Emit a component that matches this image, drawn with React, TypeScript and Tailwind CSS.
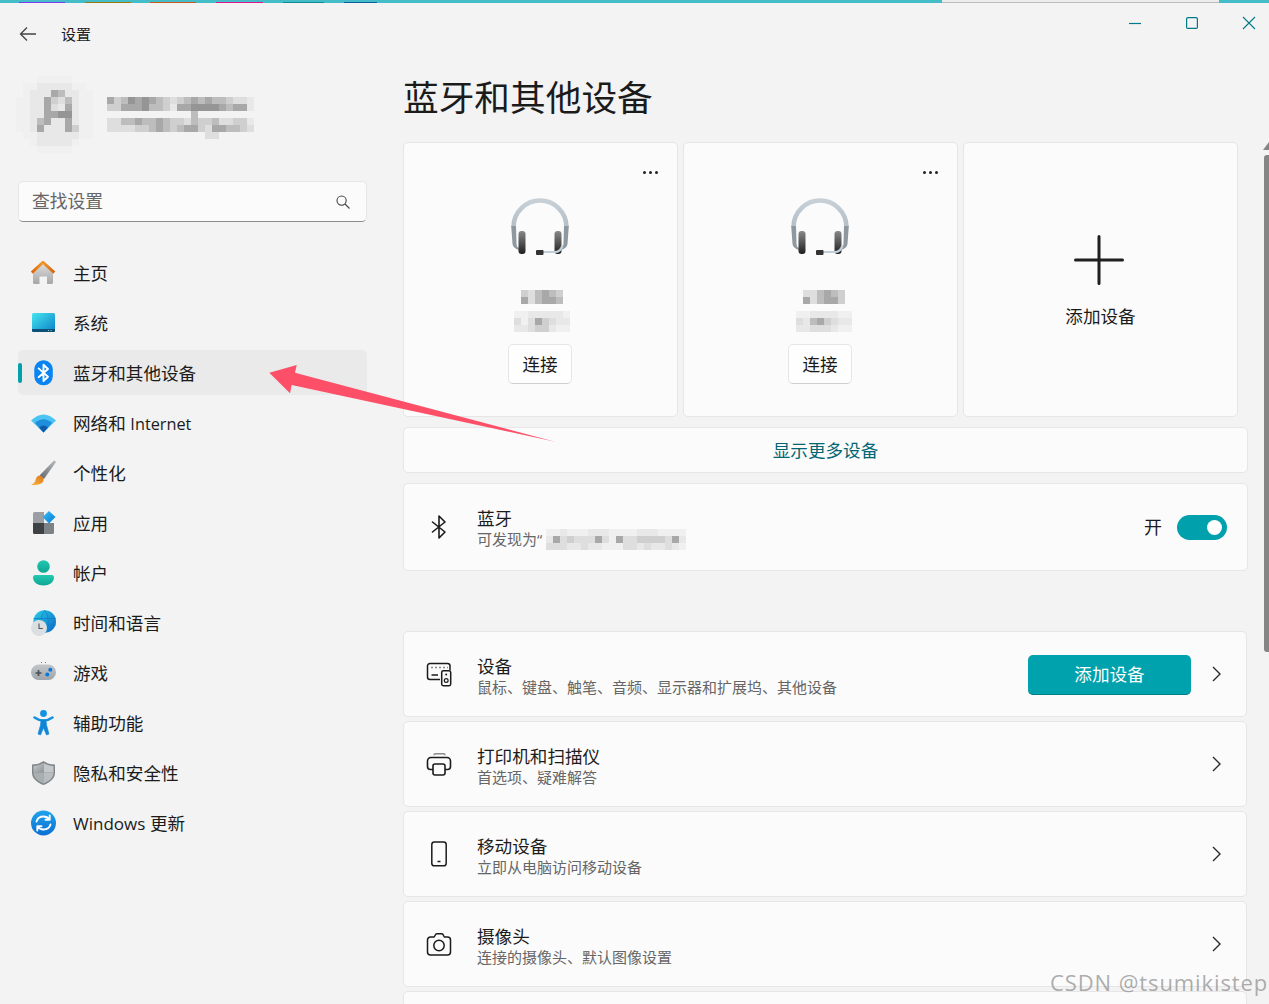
import React from "react";

const LV: Record<string, string> = {
  "1": "#f0f0f0", "2": "#e8e8e8", "3": "#dedede", "4": "#cfcfcf", "5": "#bdbdbd", "6": "#a8a8a8", "7": "#959595",
};

function Mosaic({ rows, cell = 7, className = "" }: { rows: string[]; cell?: number; className?: string }) {
  const w = Math.max(...rows.map((r) => r.length)) * cell;
  const h = rows.length * cell;
  return (
    <svg width={w} height={h} viewBox={`0 0 ${w} ${h}`} className={`block shrink-0 ${className}`} shapeRendering="crispEdges">
      {rows.map((r, y) =>
        r.split("").map((c, x) => (LV[c] ? <rect key={`${x}-${y}`} x={x * cell} y={y * cell} width={cell} height={cell} fill={LV[c]} /> : null))
      )}
    </svg>
  );
}

const I = ({ children, s = 26 }: { children: React.ReactNode; s?: number }) => (
  <svg width={s} height={s} viewBox={`0 0 ${s} ${s}`} className="block shrink-0" fill="none">{children}</svg>
);

const Home = () => (
  <I>
    <defs><linearGradient id="h1" x1="0" y1="0" x2="0" y2="1"><stop offset="0" stopColor="#dedede" /><stop offset="1" stopColor="#a6a6a6" /></linearGradient>
    <linearGradient id="h2" x1="0" y1="0" x2="1" y2="0"><stop offset="0" stopColor="#e0640a" /><stop offset=".5" stopColor="#f09a2a" /><stop offset="1" stopColor="#d95f08" /></linearGradient></defs>
    <path d="M13 3 L23 12 V22.5 a1.5 1.5 0 0 1 -1.5 1.5 H17 V16.5 H9.5 V24 H4.5 A1.5 1.5 0 0 1 3 22.5 V12 Z" fill="url(#h1)" />
    <path d="M1.8 12.6 L13 2.2 L24.2 12.6" stroke="url(#h2)" strokeWidth="2.8" strokeLinejoin="round" />
  </I>
);
const Sys = () => (
  <I>
    <defs><linearGradient id="s1" x1="0" y1="0" x2="1" y2="1"><stop offset="0" stopColor="#45e6f0" /><stop offset="1" stopColor="#0c7fc8" /></linearGradient></defs>
    <rect x="2" y="3" width="23" height="19" rx="1.5" fill="url(#s1)" />
    <path d="M2 19 H25 V20.5 a1.5 1.5 0 0 1 -1.5 1.5 H3.5 A1.5 1.5 0 0 1 2 20.5 Z" fill="#0d4f75" />
    <rect x="18" y="20" width="1" height="1" fill="#9cc" /><rect x="20.5" y="20" width="1" height="1" fill="#9cc" />
  </I>
);
const Bt = () => (
  <I>
    <rect x="4.3" y="0.3" width="18.5" height="25" rx="9" fill="#0a84f2" />
    <path d="M8.6 8.4 L18 16.8 L13.5 21 V4.8 L18 9 L8.6 17.2" stroke="#fff" strokeWidth="1.9" strokeLinejoin="round" strokeLinecap="round" />
  </I>
);
const Wifi = () => (
  <I>
    <path d="M1 10.5 Q13.5 -1.5 26 10.5 L13.5 22.5 Z" fill="#4cc4f2" />
    <path d="M5 13 Q13.5 5.5 22 13 L13.5 22.5 Z" fill="#1f8edc" />
    <path d="M9 17.5 Q13.5 13.5 18 17.5 L13.5 22.5 Z" fill="#0f5cab" />
  </I>
);
const Brush = () => (
  <I>
    <defs><linearGradient id="b1" x1="1" y1="0" x2="0" y2="1"><stop offset="0" stopColor="#b8bcc0" /><stop offset="1" stopColor="#62676c" /></linearGradient>
    <linearGradient id="b2" x1="1" y1="0" x2="0" y2="1"><stop offset="0" stopColor="#d9781e" /><stop offset="1" stopColor="#ffb43c" /></linearGradient></defs>
    <path d="M24 0.5 Q26 0.5 25.7 2.5 L14 19 L9.5 15.5 Z" fill="url(#b1)" />
    <path d="M8 16 C11 15 14 17.5 13.5 20.5 C12.5 24.5 6 25.5 1 25 C4 23.5 5 22 5.5 20 C6 18 6.5 17 8 16 Z" fill="url(#b2)" />
  </I>
);
const Apps = () => (
  <I>
    <defs><linearGradient id="a1" x1="0" y1="0" x2="1" y2="1"><stop offset="0" stopColor="#36c2f6" /><stop offset="1" stopColor="#0a76d6" /></linearGradient></defs>
    <path d="M4.5 2 H14 V13 H3 V3.5 A1.5 1.5 0 0 1 4.5 2 Z" fill="#9b9fa3" />
    <path d="M3 13 H14 V24 H4.5 A1.5 1.5 0 0 1 3 22.5 Z" fill="#3e4245" />
    <path d="M14 13 H24 V22.5 A1.5 1.5 0 0 1 22.5 24 H14 Z" fill="#7d8287" />
    <path d="M19 1 L25.5 7 L19 13.5 L12.5 7 Z" fill="url(#a1)" />
  </I>
);
const User = () => (
  <I>
    <defs><linearGradient id="u1" x1="0" y1="0" x2="0" y2="1"><stop offset="0" stopColor="#22c9b0" /><stop offset="1" stopColor="#0fa596" /></linearGradient></defs>
    <circle cx="13.5" cy="6.5" r="6.3" fill="url(#u1)" />
    <path d="M5.5 15 H21.5 A2.5 2.5 0 0 1 24 17.5 C24 22.5 19 25.5 13.5 25.5 C8 25.5 3 22.5 3 17.5 A2.5 2.5 0 0 1 5.5 15 Z" fill="url(#u1)" />
  </I>
);
const Globe = () => (
  <I>
    <defs><linearGradient id="g1" x1="0" y1="0" x2="1" y2="1"><stop offset="0" stopColor="#2ad0e4" /><stop offset="1" stopColor="#0b64c8" /></linearGradient></defs>
    <circle cx="14.7" cy="11.5" r="11.3" fill="url(#g1)" />
    <path d="M14.7 0.5 C10 6 10 17 14.7 23 M14.7 0.5 C19.5 6 19.5 17 14.7 23 M3.6 8.5 H25.8 M3.6 15 H25.8" stroke="#0f7fc8" strokeWidth=".8" />
    <circle cx="9" cy="18" r="8" fill="#dcdfe1" />
    <path d="M9 13.5 V18.5 H12.8" stroke="#555" strokeWidth="1.1" />
  </I>
);
const Game = () => (
  <I>
    <defs><linearGradient id="p1" x1="0" y1="0" x2="0" y2="1"><stop offset="0" stopColor="#c1c6ca" /><stop offset="1" stopColor="#9ea4a9" /></linearGradient></defs>
    <rect x="1" y="4.5" width="25" height="15.5" rx="7.7" fill="url(#p1)" />
    <path d="M5.5 13 H11.5 M8.5 10 V16" stroke="#4e5255" strokeWidth="1.7" />
    <circle cx="20.3" cy="9.8" r="2" fill="#0b78d8" /><circle cx="17.3" cy="14.5" r="2" fill="#0b78d8" />
    <rect x="11" y="2" width="1" height="1" fill="#777" /><rect x="15" y="2" width="1" height="1" fill="#777" />
  </I>
);
const Access = () => (
  <I>
    <circle cx="13.5" cy="3.5" r="3.4" fill="#1492e2" />
    <path d="M4.5 7.5 C8 10 10.5 10.5 13.5 10.5 C16.5 10.5 19 10 22.5 7.5" stroke="#1492e2" strokeWidth="2.6" strokeLinecap="round" />
    <path d="M11 10 H16 L16.5 15 L19 24 L16.5 25 L13.5 18 L10.5 25 L8 24 L10.5 15 Z" fill="#1086d8" stroke="#1086d8" strokeWidth=".6" strokeLinejoin="round" />
  </I>
);
const Shield = () => (
  <I>
    <defs><linearGradient id="d1" x1="0" y1="0" x2="1" y2="1"><stop offset="0" stopColor="#c9ced2" /><stop offset="1" stopColor="#8d9296" /></linearGradient></defs>
    <path d="M13.5 1 C17 3.5 21 4.5 25 4.5 V13 C25 18.5 19.5 23 13.5 25 C7.5 23 2 18.5 2 13 V4.5 C6 4.5 10 3.5 13.5 1 Z" fill="#81868a" />
    <path d="M13.5 3 C17 5 20.5 6 23.5 6 V12.5 H13.5 Z" fill="#c4c8cb" />
    <path d="M13.5 3 C10 5 6.5 6 3.5 6 V12.5 H13.5 Z" fill="url(#d1)" />
    <path d="M3.5 12.5 H13.5 V23.4 C8 21.5 3.5 17.5 3.5 13 Z" fill="#a9aeb1" />
    <path d="M23.5 12.5 H13.5 V23.4 C19 21.5 23.5 17.5 23.5 13 Z" fill="#b9bdc0" />
  </I>
);
const Update = () => (
  <I>
    <defs><linearGradient id="w1" x1="0" y1="0" x2="0" y2="1"><stop offset="0" stopColor="#1fa4ec" /><stop offset="1" stopColor="#0a6ed2" /></linearGradient></defs>
    <circle cx="13.5" cy="13" r="12.5" fill="url(#w1)" />
    <path d="M6.5 11.5 C7.5 8 10.5 6.5 13.5 6.5 C16 6.5 18 7.5 19.5 9.5 M19.7 5.5 V9.8 H15.5" stroke="#fff" strokeWidth="1.9" strokeLinecap="round" strokeLinejoin="round" />
    <path d="M20.5 14.5 C19.5 18 16.5 19.5 13.5 19.5 C11 19.5 9 18.5 7.5 16.5 M7.3 20.5 V16.2 H11.5" stroke="#fff" strokeWidth="1.9" strokeLinecap="round" strokeLinejoin="round" />
  </I>
);

const Headset = ({ k }: { k: string }) => (
  <svg width="58" height="58" viewBox="0 0 58 58" fill="none" className="block">
    <defs>
      <linearGradient id={`e1${k}`} x1="0" y1="0" x2="0" y2="1"><stop offset="0" stopColor="#8a8a8a" /><stop offset="1" stopColor="#1f1f1f" /></linearGradient>
      <linearGradient id={`e2${k}`} x1="0" y1="0" x2="0" y2="1"><stop offset="0" stopColor="#c7d0d7" /><stop offset="1" stopColor="#b4bec6" /></linearGradient>
    </defs>
    <path d="M2.5 29 A26.5 26.5 0 0 1 55.5 29" stroke={`url(#e2${k})`} strokeWidth="4.6" />
    <path d="M0.2 28 H5 L5.5 46 Q5.5 49 8 50 L8 52 Q2 50 1.5 46 Z" fill="#8f989f" />
    <path d="M57.8 28 H53 L52.5 46 Q52.5 49 50 50 L50 52 Q56 50 56.5 46 Z" fill="#8f989f" />
    <rect x="7.5" y="33" width="7" height="23" rx="3" fill={`url(#e1${k})`} />
    <rect x="43.5" y="33" width="7" height="23" rx="3" fill={`url(#e1${k})`} />
    <path d="M32 54 H44 Q50 54 51.5 47" stroke="#c0cfd9" strokeWidth="2.2" />
    <rect x="25" y="52" width="7.5" height="5" rx="1" fill="#333" />
  </svg>
);

const RowBt = () => (
  <I>
    <path d="M6.5 8 L19 18 L13 24 V2 L19 8 L6.5 18" stroke="#1b1b1b" strokeWidth="1.6" strokeLinejoin="round" strokeLinecap="round" />
  </I>
);
const RowDev = () => (
  <I>
    <path d="M14 18.5 H4 A2.5 2.5 0 0 1 1.5 16 V5 A2.5 2.5 0 0 1 4 2.5 H21.5 A2.5 2.5 0 0 1 24 5 V9" stroke="#1b1b1b" strokeWidth="1.5" />
    <path d="M5.5 6.5 h1 M9.5 6.5 h1 M13.5 6.5 h1 M17.5 6.5 h1 M21 6.5 h.5" stroke="#1b1b1b" strokeWidth="1.5" />
    <path d="M5.5 14 H12" stroke="#1b1b1b" strokeWidth="1.5" />
    <rect x="15.7" y="9.7" width="9" height="15" rx="1.6" stroke="#1b1b1b" strokeWidth="1.5" />
    <circle cx="20.2" cy="13.4" r="1" fill="#1b1b1b" />
    <circle cx="20.2" cy="19.5" r="1.9" stroke="#1b1b1b" strokeWidth="1.2" />
  </I>
);
const RowPrint = () => (
  <I>
    <path d="M8 4.2 Q8 2.8 9.5 2.8 H17.5 Q19 2.8 19 4.2" stroke="#8a8a8a" strokeWidth="1.5" />
    <path d="M7 18.5 H4.5 A3 3 0 0 1 1.5 15.5 V10 A3.5 3.5 0 0 1 5 6.5 H21 A3.5 3.5 0 0 1 24.5 10 V15.5 A3 3 0 0 1 21.5 18.5 H19" stroke="#1b1b1b" strokeWidth="1.6" />
    <rect x="7" y="13" width="12" height="11" rx="2" stroke="#1b1b1b" strokeWidth="1.6" />
  </I>
);
const RowPhone = () => (
  <I>
    <rect x="5.8" y="1" width="14.4" height="23.8" rx="2.6" stroke="#1b1b1b" strokeWidth="1.5" />
    <path d="M11.5 20.5 H14.5" stroke="#1b1b1b" strokeWidth="1.5" />
  </I>
);
const RowCam = () => (
  <I>
    <path d="M8.2 6 L9.6 3.5 Q10 2.8 11 2.8 H15.5 Q16.5 2.8 17 3.5 L18.3 6 H21.5 A3 3 0 0 1 24.5 9 V21 A3 3 0 0 1 21.5 24 H4.5 A3 3 0 0 1 1.5 21 V9 A3 3 0 0 1 4.5 6 Z" stroke="#1b1b1b" strokeWidth="1.5" strokeLinejoin="round" />
    <circle cx="13" cy="14.5" r="5.2" stroke="#1b1b1b" strokeWidth="1.5" />
  </I>
);

const Chevron = () => (
  <svg width="9" height="16" viewBox="0 0 9 16" fill="none" className="block shrink-0">
    <path d="M1 1 L8 8 L1 15" stroke="#2a2a2a" strokeWidth="1.4" />
  </svg>
);

const nav: { t: React.ReactNode; i: React.ReactNode; on?: boolean; lower?: boolean }[] = [
  { t: "主页", i: <Home /> },
  { t: "系统", i: <Sys /> },
  { t: "蓝牙和其他设备", i: <Bt />, on: true },
  { t: <>网络和 <span className="text-[16.3px]">Internet</span></>, i: <Wifi />, lower: true },
  { t: "个性化", i: <Brush /> },
  { t: "应用", i: <Apps /> },
  { t: "帐户", i: <User /> },
  { t: "时间和语言", i: <Globe /> },
  { t: "游戏", i: <Game /> },
  { t: "辅助功能", i: <Access /> },
  { t: "隐私和安全性", i: <Shield /> },
  { t: <><span className="text-[17px]">Windows</span> 更新</>, i: <Update />, lower: true },
];

const avatar = [
  "...11111...",
  ".112222211.",
  ".1222652211",
  "11226435211",
  "11226326211",
  "11226677211",
  "11256226211",
  "11262226411",
  ".1122222211",
  "..1222221..",
  "...11111...",
];
const nameM = [
  "645767654345656554332",
  "446667554266777765662",
  "............5........",
  "335565565443544533442",
  "333344565456643665543",
  "..............33.....",
];
const subA = ["435654", "635665"];
const subB = ["11222221", "31364322", "22344211"];
const subA2 = ["335654", "635664"];
const subB2 = ["11222211", "32564322", "22333211"];
const btM = [
  "11211122211112221111",
  "26343336316334444362",
  "33322322111332322321",
];

function Row({ icon, title, sub, right }: { icon: React.ReactNode; title: string; sub: string; right?: React.ReactNode }) {
  return (
    <div className="flex h-[86px] w-[844px] shrink-0 items-center rounded-[5px] border border-[#e6e6e6] bg-[#fbfbfb] pl-[22px] pr-[25px]">
      {icon}
      <div className="ml-[25px] mt-[5px] flex-1 leading-[21px]">
        <div className="text-[17.6px] leading-[21px] text-[#1b1b1b]">{title}</div>
        <div className="text-[15px] leading-[21px] text-[#666]">{sub}</div>
      </div>
      {right}
      <Chevron />
    </div>
  );
}

function DevCard({ a, b, k, ml }: { a: string[]; b: string[]; k: string; ml: string }) {
  return (
    <div className="flex h-[275px] w-[275px] shrink-0 flex-col items-center rounded-[5px] border border-[#e6e6e6] bg-[#fbfbfb]">
      <div className="flex h-[32px] w-full justify-end gap-[3px] pr-[19px] pt-[28px]">
        <span className="h-[3px] w-[3px] rounded-full bg-[#222]" />
        <span className="h-[3px] w-[3px] rounded-full bg-[#222]" />
        <span className="h-[3px] w-[3px] rounded-full bg-[#222]" />
      </div>
      <div className="-ml-[1px] mt-[23px]"><Headset k={k} /></div>
      <Mosaic rows={a} className={`mt-[34px] ${ml}`} />
      <Mosaic rows={b} className={`mt-[7px] ${ml}`} />
      <button className="-ml-[1px] mt-[12px] h-[40px] w-[64px] rounded-[5px] border border-[#e6e6e6] border-b-[#cfcfcf] bg-[#fefefe] text-[17.6px] text-[#1b1b1b]">连接</button>
    </div>
  );
}

export default function App() {
  return (
    <div className="relative h-[1004px] w-[1269px] overflow-hidden bg-[#f3f3f3] font-[family-name:'Open_Sans','Noto_Sans_CJK_SC',sans-serif] text-[#1b1b1b]">
      {/* desktop strip */}
      <div className="flex h-[3px] items-end bg-[#44bdc9]">
        <div className="ml-[19px] h-[1px] w-[46px] bg-[#7c3aed]" />
        <div className="ml-[20px] h-[1px] w-[46px] bg-[#9a7a10]" />
        <div className="ml-[19px] h-[1px] w-[46px] bg-[#c9581a]" />
        <div className="ml-[20px] h-[1px] w-[47px] bg-[#e0148c]" />
        <div className="ml-[20px] h-[1px] w-[41px] bg-[#0f8a94]" />
        <div className="ml-[20px] h-[1px] w-[33px] bg-[#0a5f9e]" />
        <div className="ml-[565px] h-[3px] w-[277px] border-b border-[#bcbcbc] bg-[#ececec]" />
      </div>

      {/* title bar */}
      <div className="flex h-[73px] items-start justify-between">
        <div className="mt-[23px] flex h-[16px] items-center">
          <svg width="18" height="16" viewBox="0 0 18 16" fill="none" className="ml-[19px] block">
            <path d="M8 1.5 L1.5 8 L8 14.5 M1.5 8 H17" stroke="#444" strokeWidth="1.3" />
          </svg>
          <span className="ml-[24px] text-[15px] leading-[16px]">设置</span>
        </div>
        <div className="mr-[13px] mt-[13px] flex items-center gap-[43px]">
          <svg width="14" height="14" viewBox="0 0 14 14" fill="none" className="block"><path d="M1 7.5 H13" stroke="#007a87" strokeWidth="1.2" /></svg>
          <svg width="14" height="14" viewBox="0 0 14 14" fill="none" className="block"><rect x="1.6" y="1.6" width="10.8" height="10.8" rx="1.2" stroke="#007a87" strokeWidth="1.2" /></svg>
          <svg width="14" height="14" viewBox="0 0 14 14" fill="none" className="block"><path d="M1 1 L13 13 M13 1 L1 13" stroke="#007a87" strokeWidth="1.1" /></svg>
        </div>
      </div>

      <div className="flex">
        {/* sidebar */}
        <aside className="w-[403px] shrink-0 pl-[18px]">
          <div className="flex h-[76px]">
            <Mosaic rows={avatar} className="-ml-[2px]" />
            <Mosaic rows={nameM} className="ml-[14px] mt-[21px]" />
          </div>
          <div className="mt-[29px] flex h-[41px] w-[349px] items-center justify-between rounded-[5px] border border-[#e6e6e6] border-b-[#8c8c8c] bg-[#fbfbfb] pl-[13px] pr-[16px]">
            <span className="text-[17.8px] text-[#666]">查找设置</span>
            <svg width="14" height="14" viewBox="0 0 14 14" fill="none" className="block">
              <circle cx="5.6" cy="5.6" r="4.6" stroke="#444" strokeWidth="1.1" />
              <path d="M9 9 L13.5 13.5" stroke="#444" strokeWidth="1.1" />
            </svg>
          </div>
          <nav className="mt-[28px] flex w-[349px] flex-col gap-[5px]">
            {nav.map((n, idx) => (
              <div key={idx} className={`relative flex h-[45px] items-center rounded-[5px] pl-[12px] ${n.on ? "bg-[#eaeaea]" : ""}`}>
                {n.on && <span className="absolute left-0 top-[13px] h-[20px] w-[4px] rounded-full bg-[#00a0ac]" />}
                {n.i}
                <span className={`ml-[17px] text-[17.6px] leading-[24px] text-[#1b1b1b] ${n.lower ? "mt-[2px]" : ""}`}>{n.t}</span>
              </div>
            ))}
          </nav>
        </aside>

        {/* main */}
        <main className="w-[845px] shrink-0">
          <h1 className="-mt-[1px] h-[45px] text-[35.7px] font-normal leading-[44px] text-[#1b1b1b]">蓝牙和其他设备</h1>
          <div className="mt-[22px] flex gap-[5px]">
            <DevCard a={subA} b={subB} k="a" ml="ml-[3px]" />
            <DevCard a={subA2} b={subB2} k="b" ml="ml-[7px]" />
            <div className="flex h-[275px] w-[275px] shrink-0 flex-col items-center rounded-[5px] border border-[#e6e6e6] bg-[#fbfbfb]">
              <svg width="50" height="50" viewBox="0 0 50 50" fill="none" className="mt-[92px] -ml-[4px] block">
                <path d="M1.5 25 H48.5 M25 1.5 V48.5" stroke="#1f1f1f" strokeWidth="3" strokeLinecap="round" />
              </svg>
              <div className="mt-[19px] text-[17.6px] leading-[24px]">添加设备</div>
            </div>
          </div>
          <div className="mt-[10px] flex h-[46px] w-[845px] items-center justify-center rounded-[5px] border border-[#e6e6e6] bg-[#fbfbfb] pt-[1px] text-[17.6px] text-[#006673]">显示更多设备</div>
          <div className="mt-[10px] flex h-[88px] w-[845px] items-center rounded-[5px] border border-[#e6e6e6] bg-[#fbfbfb] pl-[22px] pr-[20px]">
            <RowBt />
            <div className="ml-[25px] mt-[3px] flex-1">
              <div className="text-[17.6px] leading-[21px]">蓝牙</div>
              <div className="flex h-[21px] items-center text-[15px] leading-[21px] text-[#666]">
                可发现为“
                <Mosaic rows={btM} className="ml-[4px] mt-[1px]" />
              </div>
            </div>
            <span className="mr-[15px] text-[18px]">开</span>
            <div className="flex h-[25px] w-[50px] items-center justify-end rounded-full bg-[#00a0ac] pr-[5px]">
              <span className="h-[15px] w-[15px] rounded-full bg-white" />
            </div>
          </div>
          <div className="mt-[60px] flex flex-col gap-[4px]">
            <Row
              icon={<RowDev />}
              title="设备"
              sub="鼠标、键盘、触笔、音频、显示器和扩展坞、其他设备"
              right={
                <button className="mr-[21px] mt-[2px] h-[40px] w-[163px] rounded-[5px] border-b border-[#007c87] bg-[#00a2ad] text-[17.6px] text-white">添加设备</button>
              }
            />
            <Row icon={<RowPrint />} title="打印机和扫描仪" sub="首选项、疑难解答" />
            <Row icon={<RowPhone />} title="移动设备" sub="立即从电脑访问移动设备" />
            <Row icon={<RowCam />} title="摄像头" sub="连接的摄像头、默认图像设置" />
            <Row icon={null} title="" sub="" />
          </div>
        </main>
      </div>

      {/* scrollbar */}
      <div className="absolute left-[1264px] top-[155px] h-[497px] w-[5px] rounded-tl-[3px] rounded-bl-[3px] bg-[#858585]" />
      <svg width="6" height="8" viewBox="0 0 6 8" className="absolute left-[1263px] top-[142px] block"><path d="M6 0 L0 8 H6 Z" fill="#858585" /></svg>

      {/* annotation arrow */}
      <svg width="1269" height="1004" viewBox="0 0 1269 1004" className="pointer-events-none absolute left-0 top-0 block">
        <polygon points="269.3,372.7 296.7,365 295,372.7 555,441.7 291.7,385 290,393.3" fill="#fd5068" />
      </svg>

      {/* watermark */}
      <div className="absolute left-[1050px] top-[967px] whitespace-nowrap text-[22px] leading-[30px] tracking-[0.9px] text-[#8a8a8a]/70">CSDN @tsumikistep</div>
    </div>
  );
}
